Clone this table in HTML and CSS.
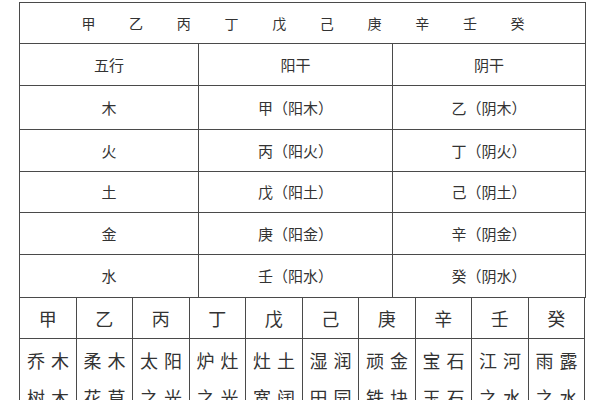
FILE: index.html
```html
<!DOCTYPE html>
<html lang="zh">
<head>
<meta charset="utf-8">
<link rel="stylesheet" href="styles.css">
</head>
<body>
<div class="page">
  <table class="top">
    <colgroup><col class="c1"><col class="c2"><col class="c3"></colgroup>
    <tr class="r-head">
      <td colspan="3">
        <div class="stems">
          <span>甲</span><span>乙</span><span>丙</span><span>丁</span><span>戊</span><span>己</span><span>庚</span><span>辛</span><span>壬</span><span>癸</span>
        </div>
      </td>
    </tr>
    <tr class="r-title"><td>五行</td><td>阳干</td><td>阴干</td></tr>
    <tr class="r-a"><td>木</td><td>甲（阳木）</td><td>乙（阴木）</td></tr>
    <tr class="r-b"><td>火</td><td>丙（阳火）</td><td>丁（阴火）</td></tr>
    <tr class="r-c"><td>土</td><td>戊（阳土）</td><td>己（阴土）</td></tr>
    <tr class="r-d"><td>金</td><td>庚（阳金）</td><td>辛（阴金）</td></tr>
    <tr class="r-e"><td>水</td><td>壬（阳水）</td><td>癸（阴水）</td></tr>
  </table>
  <table class="bottom">
    <tr class="r-stem">
      <td>甲</td><td>乙</td><td>丙</td><td>丁</td><td>戊</td><td>己</td><td>庚</td><td>辛</td><td>壬</td><td>癸</td>
    </tr>
    <tr class="r-desc">
      <td>乔木<br>树木</td><td>柔木<br>花草</td><td>太阳<br>之光</td><td>炉灶<br>之光</td><td>灶土<br>宽阔</td><td>湿润<br>田园</td><td>顽金<br>铁块</td><td>宝石<br>玉石</td><td>江河<br>之水</td><td>雨露<br>之水</td>
    </tr>
  </table>
</div>
</body>
</html>
```
FILE: styles.css
```css
html, body {
  margin: 0;
  padding: 0;
  background: #ffffff;
}
body {
  width: 600px;
  height: 400px;
  overflow: hidden;
  font-family: "Noto Sans CJK SC", "Noto Sans", sans-serif;
  color: #333333;
}
.page {
  padding: 2px 0 0 19px;
}
table {
  border-collapse: collapse;
  table-layout: fixed;
  width: 566px;
}
td {
  border: 1px solid #4a4a4a;
  padding: 0;
  text-align: center;
  vertical-align: middle;
  overflow: hidden;
  white-space: nowrap;
}
.c1 { width: 179px; }
.c2 { width: 194px; }
.c3 { width: 193px; }

.top td {
  font-size: 15px;
  line-height: 20px;
}
.r-head td { height: 40px; }
.stems {
  display: flex;
  justify-content: center;
  gap: 33.7px;
  font-size: 14px;
  padding-left: 1px;
}
.r-title td { height: 41px; }
.r-a td { height: 43px; }
.r-b td { height: 41px; }
.r-c td { height: 40px; }
.r-d td { height: 41px; }
.r-e td { height: 42px; }

.bottom td {
  border-top: none;
}
.r-stem td {
  border-top: none;
  height: 40px;
  font-size: 18px;
  line-height: 22px;
}
.r-desc td {
  font-size: 18px;
  line-height: 37px;
  letter-spacing: 6px;
  text-align: left;
  vertical-align: top;
  padding: 3px 0 0 7px;
  height: 80px;
}
```
